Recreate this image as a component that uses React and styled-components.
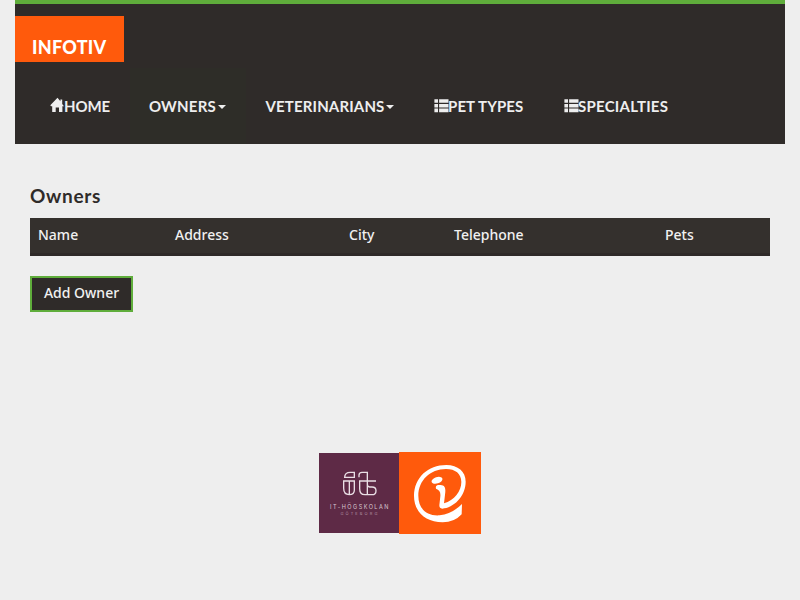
import React from 'react';
import styled, { createGlobalStyle } from 'styled-components';

const Global = createGlobalStyle`
  *, *::before, *::after { box-sizing: border-box; }
  body { margin: 0; background: #eeeeee; color: #2f2b29; font: 500 14px/20px "Noto Sans", sans-serif; }
`;

const Page = styled.div`width: 770px; margin: 0 auto; min-height: 600px;`;

const Header = styled.header`
  height: 144px;
  padding-top: 12px;
  display: flex;
  flex-direction: column;
  justify-content: space-between;
  border-top: 4px solid #5fad3b;
  background: #2f2b29;
`;

const Brand = styled.a`
  width: 109px;
  height: 46px;
  padding: 19px 0 0 17px;
  background: #ff5a0c;
  color: #fff;
  font: 900 18px/24px Lato, sans-serif;
  letter-spacing: 0.25px;
`;

const Nav = styled.nav`display: flex; height: 76px; padding-left: 15px;`;

const NavItem = styled.a`
  display: flex;
  align-items: center;
  width: ${p => p.$width}px;
  padding-left: ${p => p.$inset || 20}px;
  background: ${p => (p.$active ? '#2e2d28' : 'transparent')};
  color: #eeeeee;
  font: 700 15px/20px Lato, sans-serif;
  letter-spacing: ${p => p.$spacing}px;
  white-space: nowrap;
`;

const Icon = styled.svg`flex: none; width: 14px; height: 14px; fill: #eeeeee; overflow: visible;`;

const Caret = styled.span`
  margin: 2px 0 0 2px;
  border: 4px solid transparent;
  border-top-color: #eeeeee;
  border-bottom: 0;
`;

const Main = styled.main`padding: 41px 15px 0;`;

const Title = styled.h2`
  margin: 0;
  height: 33px;
  font: 700 19px/22px Lato, sans-serif;
  letter-spacing: 0.7px;
`;

const Table = styled.table`
  width: 740px;
  table-layout: fixed;
  border-collapse: separate;
  border-spacing: 0;
  background: #34302d;
  color: #f1f1f1;
`;

const Th = styled.th`
  width: ${p => p.$width}px;
  height: 38px;
  padding: 7px 8px 8px;
  border-bottom: 3px solid #2e2928;
  text-align: left;
  vertical-align: top;
  font-weight: 500;
`;

const Button = styled.button`
  display: block;
  width: 103px;
  height: 36px;
  margin-top: 20px;
  padding: 0 0 2px;
  border: 2px solid #5fad3b;
  background: #2f2b29;
  color: #f1f1f1;
  font: 500 14px/20px "Noto Sans", sans-serif;
  white-space: nowrap;
`;

const Footer = styled.footer`
  display: flex;
  justify-content: center;
  align-items: center;
  margin-top: 140px;
`;

const School = styled.div`
  display: flex;
  flex-direction: column;
  align-items: center;
  width: 80px;
  height: 80px;
  padding-top: 17px;
  background: #5e2a46;
  color: #d9c8d1;
`;

const SchoolMark = styled.svg`width: 36px; height: 27px; fill: none; stroke: #eadfe5; stroke-width: 4;`;

const SchoolName = styled.div`
  margin-top: 6px;
  font: 400 5.5px/8px Inter, sans-serif;
  letter-spacing: 1.5px;
  padding-left: 2px;
  white-space: nowrap;
`;

const SchoolCity = styled.div`
  font: 400 4px/5px Inter, sans-serif;
  letter-spacing: 2.1px;
  padding-left: 2px;
  color: #b293a4;
`;

const InfotivMark = styled.svg`width: 82px; height: 82px; background: #ff5a0c; fill: #fff;`;

const HomeIcon = () => (
  <Icon viewBox="0 0 14 14">
    <path d="M7.500-1.200.3 6.300 1 7.200H2.200V13H5.700V8.600H9V13H12.400V7.200H14L12.200 5V.6H10.400V2.200z" />
  </Icon>
);

const ListIcon = () => (
  <Icon viewBox="0 0 14 14">
    <path d="M.4.2h3.600v3.600H.4zM5.100.2H14.500v3.600H5.100zM.4 4.900h3.600v3.600H.4zM5.100 4.900H14.500v3.600H5.100zM.4 9.600h3.600v3.600H.4zM5.100 9.600H14.500v3.600H5.100z" />
  </Icon>
);

const items = [
  { label: 'HOME', width: 100, spacing: -0.1, icon: HomeIcon },
  { label: 'OWNERS', width: 116, spacing: 0.2, caret: true, active: true, inset: 19 },
  { label: 'VETERINARIANS', width: 168, spacing: 0.15, caret: true, inset: 19.5 },
  { label: 'PET TYPES', width: 130, spacing: 0.1, icon: ListIcon },
  { label: 'SPECIALTIES', width: 144, spacing: 0.25, icon: ListIcon },
];

const columns = [['Name', 137], ['Address', 174], ['City', 105], ['Telephone', 211], ['Pets', 113]];

export default function App() {
  return (
    <>
      <Global />
      <Page>
        <Header>
          <Brand>INFOTIV</Brand>
          <Nav>
            {items.map(({ label, width, spacing, icon: Glyph, caret, active, inset }) => (
              <NavItem key={label} $width={width} $spacing={spacing} $active={active} $inset={inset}>
                {Glyph && <Glyph />}
                <span>{label}</span>
                {caret && <Caret />}
              </NavItem>
            ))}
          </Nav>
        </Header>
        <Main>
          <Title>Owners</Title>
          <Table>
            <thead>
              <tr>{columns.map(([name, width]) => <Th key={name} $width={width}>{name}</Th>)}</tr>
            </thead>
          </Table>
          <Button>Add Owner</Button>
          <Footer>
            <School>
              <SchoolMark viewBox="93 75 108 81">
                <path d="M133 97V82H121Q104 82 104 97ZM101 108H133V136Q133 149 118 149Q101 149 101 130ZM118 108V149M147 97V91Q147 82 156 82H172V130M147 108H198M149 108V131Q149 149 165 149H186Q198 149 198 137Q198 126 186 126H179Q172 126 172 118M172 126V149" />
              </SchoolMark>
              <SchoolName>IT-HÖGSKOLAN</SchoolName>
              <SchoolCity>GÖTEBORG</SchoolCity>
            </School>
            <InfotivMark viewBox="12 21 246 246">
              <path d="M201 177L200 208Q178 232 143 232C91 232 57 199 57 153C57 98 99 60 154 60C189 60 212 80 212 110C212 149 183 183 148 190Q133 194 133 181L136 154Q138 136 123 131C120 120 129 119 137 120C153 121 152 134 150 149L147 175C178 166 199 138 199 111C199 86 181 72 153 72C105 72 70 107 70 152C70 191 95 214 134 211Q171 207 201 177Z" />
              <ellipse cx="126" cy="106" rx="17" ry="9.500" transform="rotate(-18 126 106)" />
            </InfotivMark>
          </Footer>
        </Main>
      </Page>
    </>
  );
}
